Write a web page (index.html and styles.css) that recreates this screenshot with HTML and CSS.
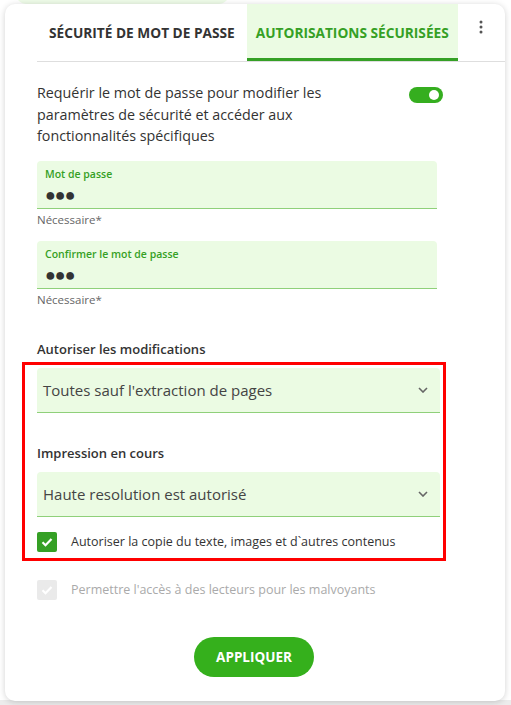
FILE: index.html
```html
<!DOCTYPE html>
<html lang="fr">
<head>
    <meta charset="UTF-8">
    <meta name="viewport" content="width=device-width, initial-scale=1.0">
    <title>Autorisations sécurisées</title>
    <link rel="stylesheet" href="styles.css">
</head>
<body>
    <div class="backdrop">
        <div class="chip"></div>
    </div>

    <div class="card">
        <!-- Tabs -->
        <div class="tabs">
            <div class="tab">Sécurité de mot de passe</div>
            <div class="tab active">Autorisations sécurisées</div>
            <button class="more" aria-label="Plus">
                <svg width="4" height="14" viewBox="0 0 4 14">
                    <circle cx="2" cy="2" r="1.5" fill="#555"/>
                    <circle cx="2" cy="7" r="1.5" fill="#555"/>
                    <circle cx="2" cy="12" r="1.5" fill="#555"/>
                </svg>
            </button>
        </div>

        <div class="content">
            <div class="require">
                <p>Requérir le mot de passe pour modifier les paramètres de sécurité et accéder aux fonctionnalités spécifiques</p>
                <span class="toggle"><span class="knob"></span></span>
            </div>

            <div class="field">
                <label>Mot de passe</label>
                <div class="dots">●●●</div>
            </div>
            <div class="hint">Nécessaire*</div>

            <div class="field">
                <label>Confirmer le mot de passe</label>
                <div class="dots">●●●</div>
            </div>
            <div class="hint">Nécessaire*</div>

            <h4 class="section-title">Autoriser les modifications</h4>

            <div class="highlight">
                <div class="select">
                    <span>Toutes sauf l'extraction de pages</span>
                    <svg class="chevron" width="10" height="6" viewBox="0 0 10 6"><path d="M1 1l4 4 4-4" fill="none" stroke="#666" stroke-width="1.6"/></svg>
                </div>

                <h4 class="section-title inner">Impression en cours</h4>

                <div class="select">
                    <span>Haute resolution est autorisé</span>
                    <svg class="chevron" width="10" height="6" viewBox="0 0 10 6"><path d="M1 1l4 4 4-4" fill="none" stroke="#666" stroke-width="1.6"/></svg>
                </div>

                <div class="check-row">
                    <span class="box checked">
                        <svg width="12" height="10" viewBox="0 0 12 10"><path d="M1.5 5.2l3 3 6-6.2" fill="none" stroke="#fff" stroke-width="2.2"/></svg>
                    </span>
                    <span>Autoriser la copie du texte, images et d`autres contenus</span>
                </div>
            </div>

            <div class="check-row disabled">
                <span class="box">
                    <svg width="12" height="10" viewBox="0 0 12 10"><path d="M1.5 5.2l3 3 6-6.2" fill="none" stroke="#fff" stroke-width="2.2"/></svg>
                </span>
                <span>Permettre l'accès à des lecteurs pour les malvoyants</span>
            </div>

            <div class="actions">
                <button class="apply">Appliquer</button>
            </div>
        </div>
    </div>
</body>
</html>
```

FILE: styles.css
```css
/* Page */
body {
    margin: 0;
    font-family: "Open Sans", "Noto Sans", sans-serif;
    color: #333;
    background-color: #fff;
    width: 511px;
    height: 705px;
    overflow: hidden;
    position: relative;
}

.backdrop {
    position: absolute;
    inset: 0;
    background: linear-gradient(#fff 0 700px, #ececec 700px);
}

.chip {
    position: absolute;
    left: 15px;
    top: -20px;
    width: 215px;
    height: 24px;
    border-radius: 12px;
    background-color: #eefbe8;
}

.card {
    position: relative;
    margin: 4px 6px 0 5px;
    height: 697px;
    background-color: #fff;
    border-radius: 10px;
    box-shadow: 0 1px 6px rgba(0, 0, 0, 0.18);
}

/* Tabs */
.tabs {
    display: flex;
    align-items: stretch;
    margin-left: 32px;
    height: 57px;
    border-bottom: 1px solid #dedede;
}

.tab {
    display: flex;
    align-items: center;
    padding: 0 12px;
    font-size: 13.7px;
    font-weight: 700;
    text-transform: uppercase;
    color: #333;
    white-space: nowrap;
}

.tab.active {
    color: #35a025;
    background-color: #ebfbe3;
    box-shadow: inset 0 -3px 0 #35a025;
    padding: 0 9px;
}

.more {
    border: 0;
    background: none;
    padding: 0;
    width: 4px;
    margin-left: auto;
    margin-right: 22px;
    margin-top: -8px;
}

/* Content */
.content {
    padding: 20px 0 0 32px;
    width: 400px;
}

.require {
    display: flex;
    justify-content: space-between;
    align-items: flex-start;
    margin-bottom: 3px;
}

.require p {
    margin: 0;
    width: 300px;
    font-size: 14.3px;
    line-height: 21.5px;
}

.toggle {
    width: 34px;
    height: 16px;
    border-radius: 8px;
    background-color: #35ae1f;
    display: flex;
    align-items: center;
    justify-content: flex-end;
    margin-top: 5px;
    margin-right: -6px;
}

.knob {
    width: 10px;
    height: 10px;
    border-radius: 50%;
    background-color: #fff;
    margin-right: 4px;
}

.field {
    margin-top: 14px;
    background-color: #ebfbe3;
    border-radius: 4px 4px 0 0;
    border-bottom: 1px solid #8fd07a;
    height: 47px;
    padding: 0 8px;
}

.field label {
    display: block;
    padding-top: 6px;
    font-size: 10.5px;
    font-weight: 600;
    color: #35a025;
}

.dots {
    font-size: 18px;
    line-height: 20px;
    letter-spacing: -1px;
    color: #333;
    margin-top: 3px;
}

.hint {
    font-size: 11.5px;
    color: #666;
    margin-top: 3px;
}

.section-title {
    margin: 33px 0 0;
    font-size: 13px;
    font-weight: 600;
}

.highlight {
    margin: 4px -9px 0 -15px;
    padding: 3px 3px 6px 12px;
    border: 3px solid #f00;
}

.select {
    display: flex;
    align-items: center;
    justify-content: space-between;
    height: 44px;
    padding: 0 12px 0 6px;
    background-color: #ebfbe3;
    border-radius: 4px 4px 0 0;
    border-bottom: 1px solid #8fd07a;
    font-size: 15px;
    color: #444;
}

.section-title.inner {
    margin: 31px 0 10px;
}

.check-row {
    display: flex;
    align-items: center;
    gap: 14px;
    margin-top: 15px;
    font-size: 12.5px;
}

.box {
    width: 20px;
    height: 20px;
    border-radius: 2px;
    background-color: #eaeaea;
    display: flex;
    align-items: center;
    justify-content: center;
}

.box.checked {
    background-color: #35a025;
}

.check-row.disabled {
    margin-top: 19px;
    color: #aaa;
}

.actions {
    display: flex;
    justify-content: center;
    margin-top: 37px;
}

.apply {
    width: 120px;
    height: 40px;
    border: 0;
    border-radius: 20px;
    background-color: #35b01c;
    color: #fff;
    font-family: inherit;
    font-size: 13.5px;
    font-weight: 700;
    text-transform: uppercase;
    margin-left: 34px;
}
```
